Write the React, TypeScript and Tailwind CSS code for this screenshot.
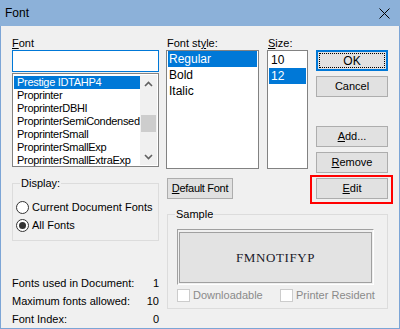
const FONTS = [
  "Prestige IDTAHP4",
  "Proprinter",
  "ProprinterDBHI",
  "ProprinterSemiCondensed",
  "ProprinterSmall",
  "ProprinterSmallExp",
  "ProprinterSmallExtraExp",
];

function Btn({ children, w = "w-[72px]" }: { children: React.ReactNode; w?: string }) {
  return (
    <div className={`${w} h-[21px] bg-[#e1e1e1] border border-[#adadad] flex items-center justify-center leading-none whitespace-nowrap`}>
      {children}
    </div>
  );
}

function Chevron({ down }: { down?: boolean }) {
  return (
    <svg width="9" height="6" viewBox="0 0 9 6" className={down ? "rotate-180" : ""}>
      <path d="M1 5 L4.5 1.5 L8 5" fill="none" stroke="#606060" strokeWidth="1.6" />
    </svg>
  );
}

function Radio({ checked, label }: { checked?: boolean; label: string }) {
  return (
    <div className="h-[18px] flex items-center gap-[3px]">
      <div className="w-[13px] h-[13px] rounded-full border border-[#333333] bg-white flex items-center justify-center">
        {checked && <div className="w-[7px] h-[7px] rounded-full bg-[#333333]" />}
      </div>
      <span>{label}</span>
    </div>
  );
}

function Check({ label, w }: { label: string; w?: string }) {
  return (
    <div className={`${w ?? ""} h-[13px] flex items-center gap-[3px]`}>
      <div className="w-[13px] h-[13px] border border-[#cccccc] bg-white" />
      <span className="text-[#8a8a8a]">{label}</span>
    </div>
  );
}

function Stat({ label, value }: { label: string; value: string }) {
  return (
    <div className="h-[18px] flex items-center justify-between">
      <span>{label}</span>
      <span>{value}</span>
    </div>
  );
}

export default function App() {
  return (
    <div className="w-[400px] h-[329px] bg-[#f0f0f0] flex flex-col overflow-hidden text-[11px] text-black font-['Liberation_Sans',Arial,sans-serif] select-none">
      {/* title bar */}
      <div className="h-[26px] bg-[#8cb1d9] flex items-center justify-between pl-[5px] pr-[10px] shrink-0">
        <span className="text-[12px]">Font</span>
        <svg width="11" height="11" viewBox="0 0 11 11">
          <path d="M0.5 0.5 L10.5 10.5 M10.5 0.5 L0.5 10.5" stroke="#000" strokeWidth="1" />
        </svg>
      </div>

      <div className="flex-1 flex border-x border-b border-[#7ca5d6] px-[11px]">
        {/* left column */}
        <div className="w-[147px] flex flex-col pt-[10px]">
          <div className="h-[14px] leading-[14px]">
            <span className="underline">F</span>ont
          </div>
          <div className="h-[22px] border border-[#0078d7] bg-white" />
          <div className="mt-[1px] h-[94px] border border-[#828282] bg-white flex p-[1px] overflow-hidden">
            <div className="flex-1 min-w-0 pt-[1px]">
              {FONTS.map((f, i) => (
                <div
                  key={f}
                  className={`h-[13px] leading-[13px] pl-[3px] whitespace-nowrap tracking-[-0.3px] ${i === 0 ? "bg-[#0078d7] text-white" : ""}`}
                >
                  {f}
                </div>
              ))}
            </div>
            <div className="w-[17px] shrink-0 bg-[#f0f0f0] flex flex-col items-center">
              <div className="h-[17px] flex items-center justify-center">
                <Chevron />
              </div>
              <div className="mt-[23px] w-[15px] h-[17px] bg-[#cdcdcd]" />
              <div className="mt-auto h-[17px] flex items-center justify-center">
                <Chevron down />
              </div>
            </div>
          </div>

          <div className="relative mt-[16px] h-[58px] border border-[#dcdcdc] pt-[14px] pl-[3px]">
            <span className="absolute left-[7px] -top-[8px] h-[14px] leading-[14px] px-[1px] bg-[#f0f0f0]">Display:</span>
            <Radio label="Current Document Fonts" />
            <Radio checked label="All Fonts" />
          </div>

          <div className="mt-[33px]">
            <Stat label="Fonts used in Document:" value="1" />
            <Stat label="Maximum fonts allowed:" value="10" />
            <Stat label="Font Index:" value="0" />
          </div>
        </div>

        {/* right area */}
        <div className="ml-[7px] w-[222px] flex flex-col">
          <div className="flex items-start">
            <div className="w-[93px] pt-[10px]">
              <div className="h-[14px] leading-[14px] pl-[1px]">
                Font st<span className="underline">y</span>le:
              </div>
              <div className="h-[119px] border border-[#828282] bg-white px-[1px] text-[12px]">
                <div className="h-[16px] leading-[16px] pl-[1px] bg-[#0078d7] text-white">Regular</div>
                <div className="h-[16px] leading-[16px] pl-[1px]">Bold</div>
                <div className="h-[16px] leading-[16px] pl-[1px]">Italic</div>
              </div>
            </div>
            <div className="ml-[8px] w-[41px] pt-[10px]">
              <div className="h-[14px] leading-[14px] pl-[1px]">
                <span className="underline">S</span>ize:
              </div>
              <div className="h-[119px] border border-[#828282] bg-white px-[1px] pt-[1px] text-[12px]">
                <div className="h-[16px] leading-[16px] pl-[2px]">10</div>
                <div className="h-[16px] leading-[16px] pl-[2px] bg-[#0078d7] text-white">12</div>
              </div>
            </div>
            <div className="ml-[8px] w-[72px] pt-[24px] flex flex-col">
              <div className="w-[72px] h-[21px] bg-[#e1e1e1] border-2 border-[#0078d7] p-[1px]">
                <div className="h-full border border-dotted border-black flex items-center justify-center leading-none text-[12px]">
                  OK
                </div>
              </div>
              <div className="mt-[5px]">
                <Btn>Cancel</Btn>
              </div>
              <div className="mt-[29px]">
                <Btn>
                  <span className="underline">A</span>dd...
                </Btn>
              </div>
              <div className="mt-[5px]">
                <Btn>
                  <span className="underline">R</span>emove
                </Btn>
              </div>
            </div>
          </div>

          <div className="mt-[5px] flex items-start justify-between">
            <div className="ml-[1px]">
              <Btn w="w-[66px] tracking-[-0.3px]">
                <span className="underline">D</span>efault Font
              </Btn>
            </div>
            <div className="relative">
              <Btn>
                <span className="underline">E</span>dit
              </Btn>
              <div className="absolute -left-[6px] -top-[3px] w-[83px] h-[29px] border-2 border-[#ff0000]" />
            </div>
          </div>

          <div className="relative mt-[15px] ml-[1px] w-[221px] h-[95px] border border-[#dcdcdc] pt-[14px] pl-[9px]">
            <span className="absolute left-[7px] -top-[8px] h-[14px] leading-[14px] px-[1px] bg-[#f0f0f0]">Sample</span>
            <div className="w-[197px] h-[56px] border-t border-l border-[#a0a0a0] border-r-white border-b-white border-r border-b pt-[2px] pl-[1px] pr-[1px] pb-[1px]">
              <div className="h-full border border-[#a0a0a0] bg-[#e3e3e3] flex items-center justify-center font-['Liberation_Serif','Times_New_Roman',serif] text-[13px] tracking-[0.6px] text-[#1a1a2a]">
                FMNOTIFYP
              </div>
            </div>
            <div className="mt-[4px] flex">
              <Check w="w-[103px]" label="Downloadable" />
              <Check label="Printer Resident" />
            </div>
          </div>
        </div>
      </div>
    </div>
  );
}
